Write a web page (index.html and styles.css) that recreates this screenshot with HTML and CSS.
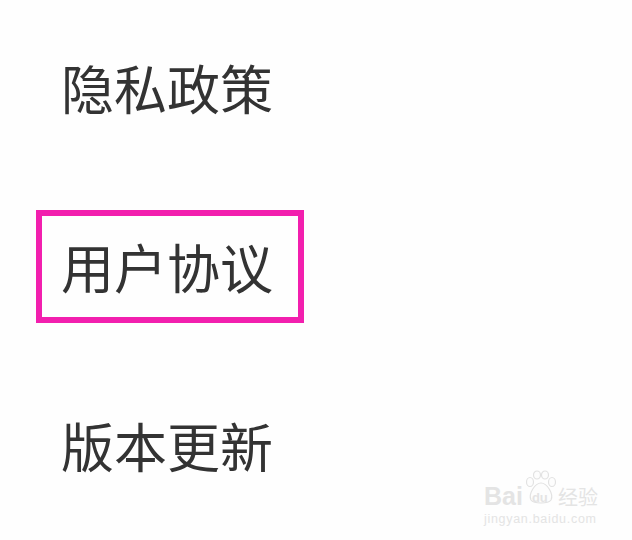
FILE: index.html
```html
<!DOCTYPE html>
<html lang="zh-CN">
    <head>
        <meta charset="UTF-8" />
        <meta name="viewport" content="width=device-width, initial-scale=1.0" />
        <title>设置</title>
        <link rel="stylesheet" href="styles.css">
    </head>
    <body>
        <ul class="menu">
            <li class="item">隐私政策</li>
            <li class="item on">用户协议</li>
            <li class="item">版本更新</li>
        </ul>

        <!-- 워터마크 -->
        <div class="mark">
            <div class="mark-top">
                <span class="bai">Bai</span>
                <span class="paw">
                    <svg width="32" height="34" viewBox="0 0 32 34">
                        <g fill="#fdfdfd" stroke="#e2e2e2" stroke-width="1.2">
                            <ellipse cx="5" cy="12" rx="3.5" ry="4.5"/>
                            <ellipse cx="12" cy="5" rx="3.5" ry="4"/>
                            <ellipse cx="20" cy="5" rx="3.5" ry="4"/>
                            <ellipse cx="27" cy="12" rx="3.5" ry="4.5"/>
                            <path d="M16 13 C10 13 3 24 6 30 C9 34 23 34 26 30 C29 24 22 13 16 13 Z"/>
                        </g>
                    </svg>
                    <span class="du">du</span>
                </span>
                <span class="jy">经验</span>
            </div>
            <div class="mark-url">jingyan.baidu.com</div>
        </div>
    </body>
</html>
```

FILE: styles.css
```css
html,
body {
    margin: 0;
    padding: 0;
    height: 100%;
}
body {
    background: #fefefe;
    color: #333;
    font-family: "Noto Sans CJK SC", "Noto Sans", sans-serif;
    position: relative;
    overflow: hidden;
}

ul {
    margin: 0;
    padding: 0;
    list-style: none;
}

/* 메뉴 전체 */
.menu {
    display: flex;
    flex-direction: column;
    gap: 66px;
    padding: 31px 0 0 36px;
}
.item {
    box-sizing: border-box;
    width: 268px;
    height: 113px;
    padding-left: 19px;
    border: 6px solid transparent;
    display: flex;
    align-items: center;
    font-size: 53px;
    line-height: 1;
}
/* 선택 표시 */
.item.on {
    border-color: #f21fae;
}

/* 워터마크 */
.mark {
    position: absolute;
    left: 484px;
    top: 468px;
    width: 120px;
    color: #e4e4e4;
    font-family: "Liberation Sans", sans-serif;
}
.mark-top {
    display: flex;
    align-items: flex-end;
    height: 42px;
}
.bai {
    font-size: 25px;
    font-weight: bold;
    line-height: 1;
    margin-bottom: 1px;
}
.paw {
    position: relative;
    width: 32px;
    height: 40px;
    margin-left: 2px;
    display: flex;
    align-items: flex-start;
}
.du {
    position: absolute;
    left: 7px;
    bottom: 5px;
    font-size: 13px;
    font-weight: bold;
}
.jy {
    font-family: "Noto Sans CJK SC", sans-serif;
    font-size: 20px;
    line-height: 1;
    margin: 0 0 3px 1px;
}
.mark-url {
    font-size: 12.5px;
    letter-spacing: 0.7px;
    margin-top: 2px;
}
```
